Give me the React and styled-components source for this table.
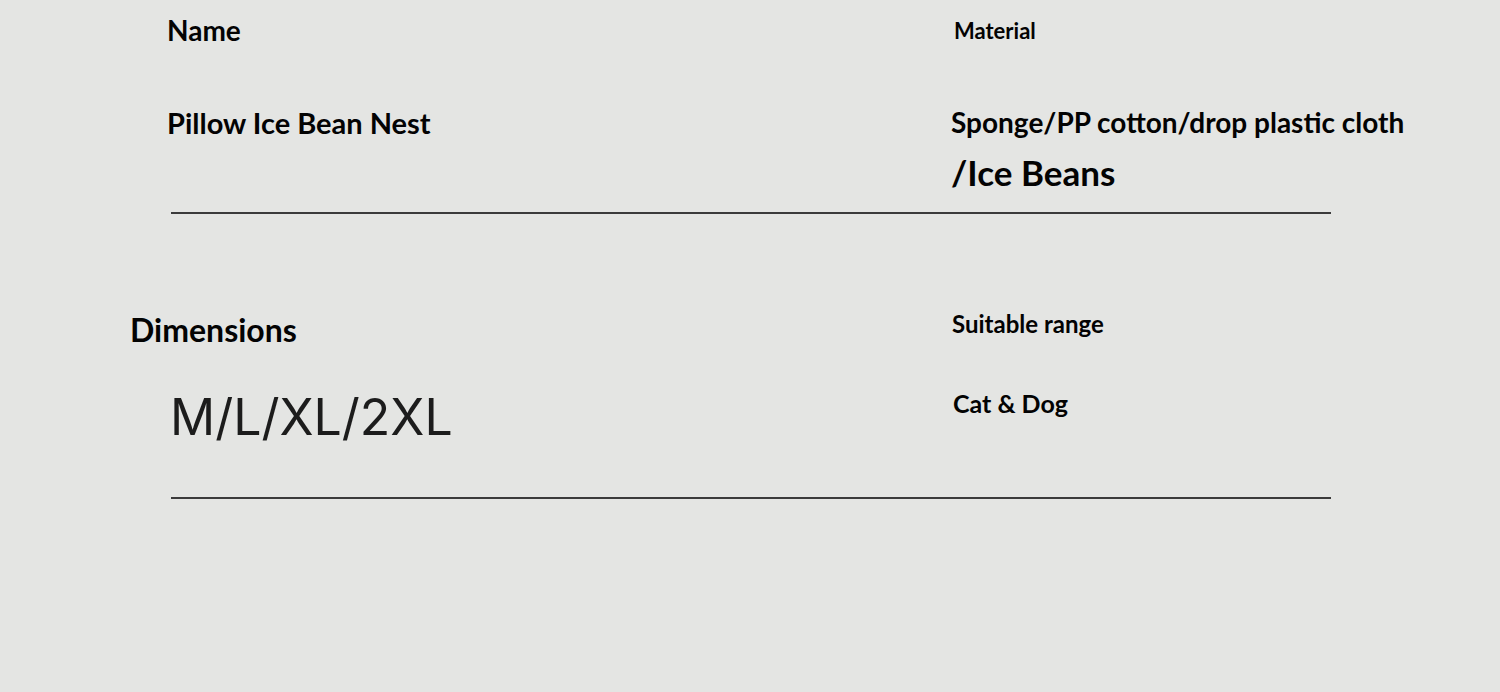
import React from 'react';
import styled, { createGlobalStyle } from 'styled-components';

const GlobalStyle = createGlobalStyle`
    html, body {
        margin: 0;
        padding: 0;
        background: #e4e5e3;
    }
`;

const Page = styled.div`
    width: 1500px;
    height: 692px;
    overflow: hidden;
    background: #e4e5e3;
    font-family: Lato, 'Open Sans', sans-serif;
    color: #030303;
`;

const Row = styled.div`
    display: grid;
    grid-template-columns: 784px 1fr;
    align-items: start;
    padding-left: 167px;
    padding-top: ${props => props.top}px;
`;

const Column = styled.div`
    display: flex;
    flex-direction: column;
    align-items: flex-start;
`;

const Text = styled.div`
    font-size: ${props => props.size}px;
    font-weight: 700;
    line-height: 1;
    white-space: nowrap;
    margin-top: ${props => props.mt || 0}px;
    margin-left: ${props => props.ml || 0}px;
`;

const SizeText = styled.div`
    font-family: Inter, 'DejaVu Sans', sans-serif;
    font-weight: 400;
    font-size: 50px;
    line-height: 1;
    color: #1c1c1c;
    margin-top: 46px;
    margin-left: 3px;
    white-space: nowrap;
`;

const Divider = styled.div`
    width: 1160px;
    height: 2px;
    margin-left: 171px;
    margin-top: ${props => props.mt}px;
    background: #3b3b3b;
`;

export default function App() {
    return (
        <Page>
            <GlobalStyle />
            <Row top={16}>
                <Column>
                    <Text size={28}>Name</Text>
                    <Text size={29} mt={64}>Pillow Ice Bean Nest</Text>
                </Column>
                <Column>
                    <Text size={22} mt={4} ml={3}>Material</Text>
                    <Text size={28} mt={66}>Sponge/PP cotton/drop plastic cloth</Text>
                    <Text size={35} mt={19}>/Ice Beans</Text>
                </Column>
            </Row>
            <Divider mt={22} />
            <Row top={98}>
                <Column>
                    <Text size={32} mt={2} ml={-37}>Dimensions</Text>
                    <SizeText>M/L/XL/2XL</SizeText>
                </Column>
                <Column>
                    <Text size={24} ml={1}>Suitable range</Text>
                    <Text size={25} mt={55} ml={2}>Cat &amp; Dog</Text>
                </Column>
            </Row>
            <Divider mt={55} />
        </Page>
    );
}
